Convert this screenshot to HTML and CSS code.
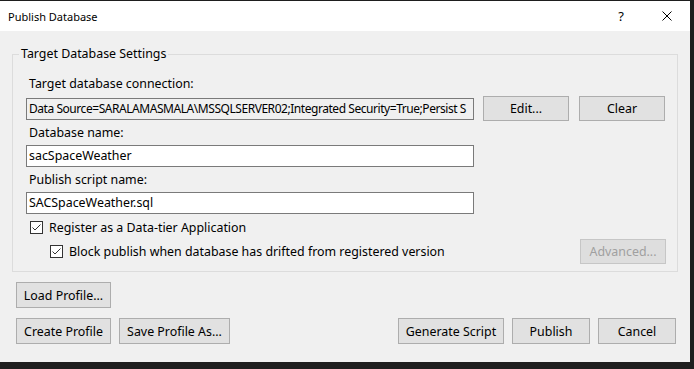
FILE: index.html
```html
<!DOCTYPE html>
<html lang="en">
<head>
  <meta charset="UTF-8">
  <title>Publish Database</title>
  <link rel="stylesheet" href="styles.css">
</head>
<body>
  <div class="dialog">
    <div class="titlebar">
      <span class="title">Publish Database</span>
      <span class="help">?</span>
      <svg class="close" viewBox="0 0 10 10" fill="none" stroke="#000" stroke-width="1">
        <line x1="0.5" y1="0.5" x2="9.5" y2="9.5"></line>
        <line x1="9.5" y1="0.5" x2="0.5" y2="9.5"></line>
      </svg>
    </div>

    <div class="content">
      <fieldset class="group">
        <legend>Target Database Settings</legend>

        <div class="label">Target database connection:</div>
        <div class="row">
          <div class="textbox readonly">Data Source=SARALAMASMALA\MSSQLSERVER02;Integrated Security=True;Persist S</div>
          <button class="btn">Edit...</button>
          <button class="btn">Clear</button>
        </div>

        <div class="label">Database name:</div>
        <div class="textbox">sacSpaceWeather</div>

        <div class="label">Publish script name:</div>
        <div class="textbox">SACSpaceWeather.sql</div>

        <div class="check first">
          <svg class="box" viewBox="0 0 13 13" fill="none" stroke="#333" stroke-width="1">
            <rect x="0.5" y="0.5" width="12" height="12"></rect>
            <polyline points="2.5,6.5 5,9 10.5,3.5"></polyline>
          </svg>
          <span>Register as a Data-tier Application</span>
        </div>
        <div class="check-row">
          <div class="check nested">
            <svg class="box" viewBox="0 0 13 13" fill="none" stroke="#333" stroke-width="1">
              <rect x="0.5" y="0.5" width="12" height="12"></rect>
              <polyline points="2.5,6.5 5,9 10.5,3.5"></polyline>
            </svg>
            <span>Block publish when database has drifted from registered version</span>
          </div>
          <button class="btn" disabled>Advanced...</button>
        </div>
      </fieldset>

      <div class="actions">
        <button class="btn load">Load Profile...</button>
      </div>
      <div class="footer">
        <div class="left">
          <button class="btn create">Create Profile</button>
          <button class="btn save">Save Profile As...</button>
        </div>
        <div class="right">
          <button class="btn generate">Generate Script</button>
          <button class="btn publish">Publish</button>
          <button class="btn publish">Cancel</button>
        </div>
      </div>
    </div>
  </div>
</body>
</html>
```

FILE: styles.css
```css
*, *::before, *::after {
  margin: 0;
  padding: 0;
  box-sizing: border-box;
}

body {
  font-family: "Noto Sans", "Open Sans", sans-serif;
  font-size: 12.4px;
  color: #000;
  background-color: #1e1e1e;
  height: 369px;
  overflow: hidden;
}

.dialog {
  width: 690px;
  height: 361px;
  margin-top: 1px;
  background-color: #f0f0f0;
}

.titlebar {
  height: 30px;
  background-color: #fff;
  display: flex;
  align-items: center;
  padding-left: 8px;
  font-size: 11px;
}

.title {
  flex: 1;
}

.help {
  margin-right: 38px;
  font-size: 13px;
}

.close {
  width: 10px;
  height: 10px;
  margin-right: 18px;
}

.content {
  padding-top: 15px;
}

.group {
  margin: 0 12px;
  border: 1px solid #dcdcdc;
  padding: 14px 11px 7px 13px;
}

.group legend {
  margin-left: -7px;
  padding: 0 2px;
  line-height: 16px;
}

.label {
  height: 16px;
  line-height: 16px;
  padding-left: 3px;
  margin-bottom: 4px;
}

.textbox {
  width: 448px;
  height: 22px;
  line-height: 20px;
  padding: 0 2px;
  border: 1px solid #7a7a7a;
  background-color: #fff;
  white-space: nowrap;
  overflow: hidden;
  margin-bottom: 5px;
}

.textbox.readonly {
  background-color: #f0f0f0;
  font-size: 12px;
  letter-spacing: -0.45px;
  flex-shrink: 0;
}

.row {
  display: flex;
  align-items: center;
  gap: 9px;
  margin-bottom: 4px;
}

.row .textbox {
  margin-bottom: 0;
}

.row .btn + .btn {
  margin-left: 1px;
}

.btn {
  font-family: inherit;
  font-size: 12.4px;
  color: #000;
  background-color: #e1e1e1;
  border: 1px solid #adadad;
  height: 25px;
  width: 86px;
}

.btn:disabled {
  color: #a0a0a0;
  background-color: #dedede;
  border-color: #c6c6c6;
}

.check {
  display: flex;
  align-items: center;
  gap: 6px;
  height: 16px;
  white-space: nowrap;
}

.check.first {
  margin-top: 3px;
  padding-left: 4px;
}

.box {
  width: 13px;
  height: 13px;
  background-color: #fff;
  flex-shrink: 0;
}

.check-row {
  display: flex;
  align-items: center;
  justify-content: space-between;
  margin-top: 4px;
}

.check.nested {
  padding-left: 24px;
}

.actions {
  padding: 10px 16px 0;
}

.load {
  width: 95px;
  height: 26px;
}

.footer {
  display: flex;
  justify-content: space-between;
  padding: 10px 14px 0 16px;
}

.left,
.right {
  display: flex;
  gap: 8px;
}

.create {
  width: 95px;
  height: 26px;
}

.save {
  width: 111px;
  height: 26px;
}

.generate {
  width: 106px;
  height: 26px;
}

.publish {
  width: 78px;
  height: 26px;
}
```
